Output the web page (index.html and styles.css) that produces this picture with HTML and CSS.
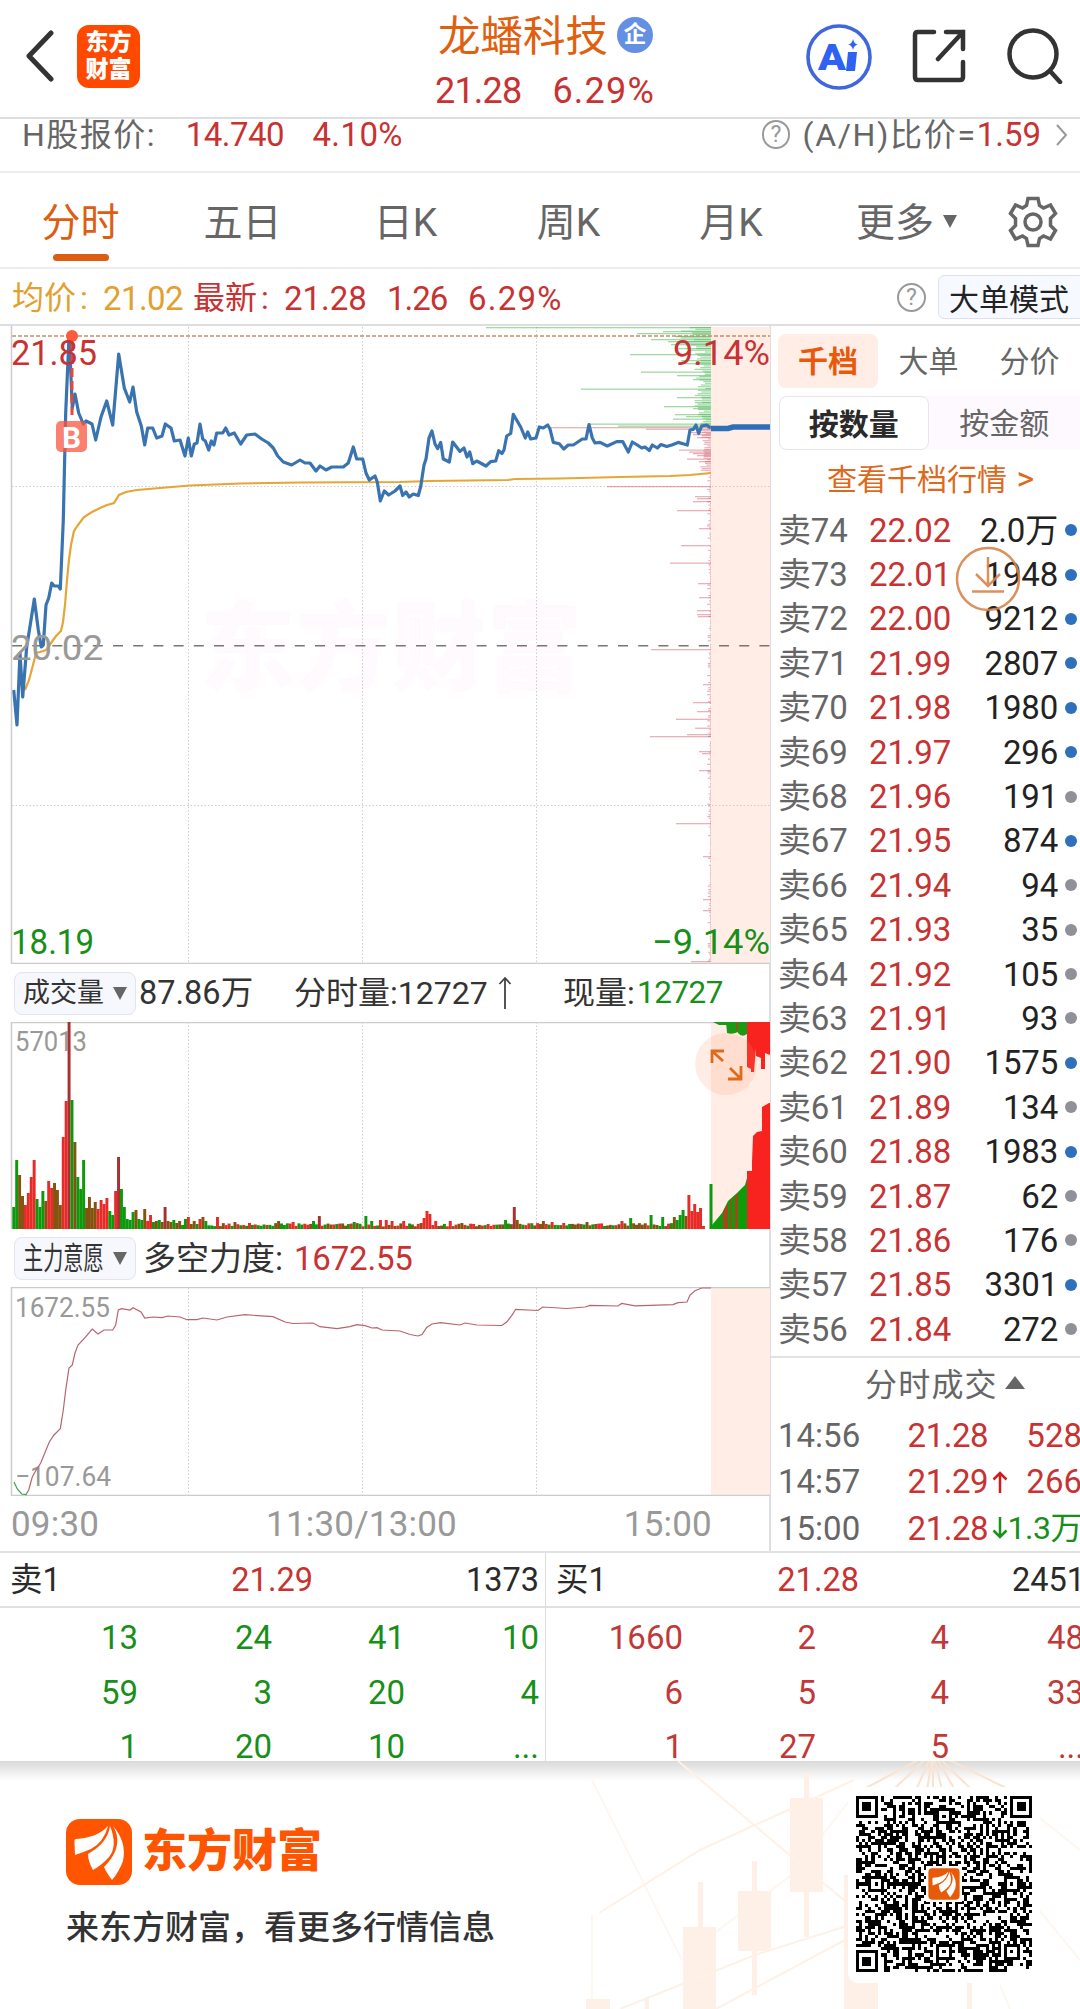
FILE: index.html
```html
<!DOCTYPE html>
<html lang="zh-CN">
<head>
  <meta charset="UTF-8" />
  <title>龙蟠科技 21.28 6.29%</title>
  <link rel="stylesheet" href="styles.css">
</head>
<body>

  <header class="header">
    <svg class="back" width="30" height="52" viewBox="0 0 30 52"><path d="M26 3 L4 26 L26 49" /></svg>
    <div class="app-icon"><span>东方</span><span>财富</span></div>
    <div class="stock">
      <div class="stock-name">龙蟠科技<span class="badge">企</span></div>
      <div class="stock-price"><span>21.28</span><span>6.29%</span></div>
    </div>
    <svg class="ai" width="68" height="68" viewBox="0 0 68 68">
      <circle cx="34" cy="34" r="31" fill="none" stroke="#3f66dc" stroke-width="3.6" />
      <text x="13" y="47" textLength="28" lengthAdjust="spacingAndGlyphs">A</text>
      <path d="M43 29 L52 29 L50 48 L41 48 Z M48 16 Q49 21 53 21.500 Q49 22 48 27 Q47 22 43 21.500 Q47 21 48 16 Z" fill="#2f62f2" />
    </svg>
    <svg class="share" width="54" height="54" viewBox="0 0 54 54"><path d="M22 3 H6 Q3 3 3 6 V48 Q3 51 6 51 H48 Q51 51 51 48 V33 M34 3 H51 V20 M51 3 L26 30" /></svg>
    <svg class="search" width="56" height="56" viewBox="0 0 56 56"><circle cx="26" cy="26" r="23.500" /><path d="M43 43 L53 54" /></svg>
  </header>

  <div class="h-row">
    <span class="h-label">H股报价:</span>
    <span class="h-price">14.740</span>
    <span class="h-pct">4.10%</span>
    <span class="help">?</span>
    <span class="ratio">(A/H)比价=<b>1.59</b></span>
    <svg width="14" height="24" viewBox="0 0 14 24"><path d="M2 2 L11 12 L2 22" fill="none" stroke="#999" stroke-width="2" /></svg>
  </div>

  <nav class="tabs">
    <a class="tab active">分时</a>
    <a class="tab">五日</a>
    <a class="tab">日K</a>
    <a class="tab">周K</a>
    <a class="tab">月K</a>
    <a class="tab more">更多<i class="tri"></i></a>
    <svg class="gear" width="50" height="52" viewBox="-25 -26 50 52">
      <path d="M-5 -23.500 H5 L6.500 -16.500 L10.500 -14 L17.500 -17 L22.500 -8.500 L17.500 -3.500 V3.500 L22.500 8.500 L17.500 17 L10.500 14 L6.500 16.500 L5 23.500 H-5 L-6.500 16.500 L-10.500 14 L-17.500 17 L-22.500 8.500 L-17.500 3.500 V-3.500 L-22.500 -8.500 L-17.500 -17 L-10.500 -14 L-6.500 -16.500 Z" />
      <circle r="8" />
    </svg>
  </nav>

  <div class="info">
    <span class="avg-label">均价<em>:</em></span>
    <span class="avg">21.02</span>
    <span class="last-label">最新<em>:</em></span>
    <span class="last">21.28</span>
    <span class="chg">1.26</span>
    <span class="pct">6.29%</span>
    <span class="help">?</span>
    <button class="big-mode">大单模式</button>
  </div>

  <main class="main">
    <section class="charts">
      <svg class="chart" width="771" height="638" viewBox="0 326 771 638">
        <rect x="711" y="327" width="59" height="637" fill="#ffede6" />
        <text class="watermark" x="200" y="683" textLength="382" lengthAdjust="spacingAndGlyphs">东方财富</text>
        <g class="grid">
          <path d="M188.500 327 V964 M362.500 327 V964 M536.500 327 V964 M12 486.500 H770 M12 805.500 H770" />
        </g>
        <g id="depth"></g>
        <path d="M12 336 H770" stroke="#c39164" stroke-width="1.300" stroke-dasharray="4 2" />
        <path d="M12 645.700 H770" stroke="#777" stroke-width="1.600" stroke-dasharray="10 10.200" />
        <polyline id="avgLine" fill="none" stroke="#e5a636" stroke-width="2.200" />
        <polyline id="priceLine" fill="none" stroke="#3a74b0" stroke-width="3.200" stroke-linejoin="round" />
        <path d="M711 428.500 H728 L733 427 H770" fill="none" stroke="#2f6fb8" stroke-width="5.500" />
        <circle cx="72" cy="336" r="6" fill="#fb5a3c" />
        <path d="M72 342 V415" stroke="#e8473c" stroke-width="3" stroke-dasharray="9 4" />
        <rect x="56" y="421" width="31" height="31" rx="5" fill="#fa5540" fill-opacity=".75" />
        <text x="62" y="448" class="mark" textLength="19" lengthAdjust="spacingAndGlyphs">B</text>
        <g class="label">
          <text class="red" x="11" y="365" textLength="86" lengthAdjust="spacingAndGlyphs">21.85</text>
          <text class="red" x="673" y="365" textLength="97" lengthAdjust="spacingAndGlyphs">9.14%</text>
          <text class="gray" x="11" y="660" textLength="92" lengthAdjust="spacingAndGlyphs">20.02</text>
          <text class="green" x="11" y="954" textLength="83" lengthAdjust="spacingAndGlyphs">18.19</text>
          <text class="green" x="652" y="954" textLength="118" lengthAdjust="spacingAndGlyphs">−9.14%</text>
        </g>
        <path class="frame" d="M11.500 326 V963.500 H770" />
      </svg>

      <div class="chart-bar">
        <span class="picker"><span class="picker-text">成交量</span><i class="tri"></i></span>
        <span class="vol">87.86万</span>
        <span class="vol-min">分时量:12727</span>
        <svg width="14" height="34" viewBox="0 0 14 34"><path d="M7 33 V2 M1.500 8 L7 2 L12.500 8" fill="none" stroke="#444" stroke-width="1.800" /></svg>
        <span class="vol-now">现量:</span><span class="vol-now-num green">12727</span>
      </div>

      <svg class="chart" width="771" height="207" viewBox="0 1022 771 207">
        <rect x="711" y="1022" width="59" height="207" fill="#ffede6" />
        <g class="grid"><path d="M188.500 1022 V1229 M362.500 1022 V1229 M536.500 1022 V1229" /></g>
        <g class="label small"><text class="gray" x="15" y="1051" textLength="72" lengthAdjust="spacingAndGlyphs">57013</text></g>
        <path class="frame" d="M11.500 1229 V1022.500 H770" />
        <g id="volume"></g>
        <path d="M713 1022 H727 V1025 H719 Z M726 1022 H738 V1032 Q732 1035 727 1033 Z M738 1022 H747 V1034 Q742 1038 738 1033 Z" fill="#1c9a16" />
        <path d="M736 1022 h2 v9 h-2 z" fill="#8a5a14" />
        <path d="M747 1022 H770 V1055 L765 1053 V1069 H761 V1058 L756 1056 V1048 L754 1072 L751 1072 V1069 L747 1067 Z" fill="#f8221f" />
        <path d="M712 1229 V1225 L722 1213 L728 1201 L737 1193 L745 1185 L747 1178 V1229 Z" fill="#0f9c0b" />
        <path d="M723 1229 V1212 L728 1203 V1229 Z M735 1229 V1196 L738 1193 V1229 Z M730 1229 V1199 h1.500 V1229 Z" fill="#a5471a" />
        <path d="M747 1229 V1171 H752 V1162 L753 1136 L757 1132 L762 1131 V1107 L769 1103 H770 V1229 Z" fill="#f8221f" />
        <circle cx="726" cy="1064" r="31" fill="#ff9664" fill-opacity=".17" />
        <path d="M712 1063 V1051 H724 M712 1051 L723 1061 M728 1079 H741 V1066 M741 1079 L730 1068" fill="none" stroke="#e06a1c" stroke-width="2.800" />
      </svg>

      <div class="chart-bar">
        <span class="picker narrow"><span class="picker-text"><span>主力意愿</span></span><i class="tri"></i></span>
        <span class="force">多空力度:</span>
        <span class="force-num">1672.55</span>
      </div>

      <svg class="chart" width="771" height="209" viewBox="0 1287 771 209">
        <rect x="711" y="1288" width="59" height="207" fill="#ffede6" />
        <g class="grid"><path d="M188.500 1288 V1495 M362.500 1288 V1495 M536.500 1288 V1495" /></g>
        <path class="frame" d="M770 1287.500 H11.500 V1495.500 H770" />
        <g class="label small">
          <text class="gray" x="15" y="1317" textLength="95" lengthAdjust="spacingAndGlyphs">1672.55</text>
          <text class="gray" x="15" y="1486" textLength="96" lengthAdjust="spacingAndGlyphs">−107.64</text>
        </g>
        <polyline points="14,1482 17.300,1489 21.700,1494 26,1494.500 28.700,1490" fill="none" stroke="#4a9c55" stroke-width="1.200" />
        <polyline id="forceLine" fill="none" stroke="#b8646c" stroke-width="1.200" />
      </svg>

      <div class="axis"><span>09:30</span><span>11:30/13:00</span><span>15:00</span></div>
    </section>

    <aside class="side">
      <div class="side-tabs"><span class="on">千档</span><span>大单</span><span>分价</span></div>
      <div class="side-mode"><span class="on">按数量</span><span>按金额</span></div>
      <a class="side-link">查看千档行情 <i>&gt;</i></a>
      <div class="asks" id="asks"></div>
      <div class="deals-title">分时成交<i class="tri-up"></i></div>
      <div class="deals">
        <div class="deal"><span>14:56</span><b>21.28</b><i></i><b class="n">528</b></div>
        <div class="deal"><span>14:57</span><b>21.29</b><i><svg width="16" height="22" viewBox="0 0 16 22"><path d="M8 22 V2 M1.500 8.500 L8 2 L14.500 8.500" fill="none" stroke="#d01c1c" stroke-width="2.500" /></svg></i><b class="n">266</b></div>
        <div class="deal"><span>15:00</span><b>21.28</b><i><svg width="16" height="22" viewBox="0 0 16 22"><path d="M8 0 V20 M1.500 13.500 L8 20 L14.500 13.500" fill="none" stroke="#18921a" stroke-width="2.500" /></svg></i><b class="n green">1.3万</b></div>
      </div>
      <svg class="float-btn" width="66" height="66" viewBox="0 0 66 66"><circle cx="33" cy="33" r="31" /><path d="M33 11 V40 M21 28 L33 40 L45 28 M17 45.500 H49" /></svg>
    </aside>
  </main>

  <section class="book">
    <div class="book-half">
      <div class="book-head"><span>卖1</span><b>21.29</b><span class="q">1373</span></div>
      <div class="book-grid sell">
        <span>13</span><span>24</span><span>41</span><span>10</span>
        <span>59</span><span>3</span><span>20</span><span>4</span>
        <span>1</span><span>20</span><span>10</span><span>...</span>
      </div>
    </div>
    <div class="book-half buy-half">
      <div class="book-head"><span>买1</span><b>21.28</b><span class="q">2451</span></div>
      <div class="book-grid buy">
        <span>1660</span><span>2</span><span>4</span><span>48</span>
        <span>6</span><span>5</span><span>4</span><span>33</span>
        <span>1</span><span>27</span><span>5</span><span>...</span>
      </div>
    </div>
  </section>

  <footer class="footer">
    <svg class="footer-bg" width="520" height="248" viewBox="560 1761 520 248">
      <g fill="#fff0e7">
        <rect x="790" y="1798" width="33" height="94" /><rect x="804" y="1773" width="5" height="164" />
        <rect x="738" y="1891" width="33" height="60" /><rect x="752" y="1861" width="5" height="134" />
        <rect x="683" y="1927" width="33" height="82" /><rect x="698" y="1882" width="5" height="50" />
        <rect x="844" y="1875" width="34" height="134" /><rect x="586" y="1999" width="24" height="10" />
        <rect x="645" y="1998" width="4" height="11" /><rect x="967" y="1980" width="5" height="29" />
      </g>
      <g fill="none" stroke="#fef1e6" stroke-width="2">
        <path d="M678 1761 L792 1857 L862 1915 M599 1913 L700 1850 L854 1780 M620 2009 L755 1955 L850 1925 M716 2009 L845 1940" />
        <path d="M592 1780 L682 1960 M592 1915 V2000 M716 1932 L790 1876 L850 1800 M1035 1814 L1080 1850 M1035 1905 L1080 1960 M1000 1985 L1010 2009" stroke-opacity=".6" />
        <path d="M933 1752 L866 1788 M933 1752 L895 1788 M933 1752 L916 1790 M933 1752 L927 1790 M933 1752 V1790 M933 1752 L942 1790 M933 1752 L955 1790 M933 1752 L972 1790 M933 1752 L1006 1788" stroke="#fbe3d0" />
      </g>
    </svg>
    <div class="brand">
      <div class="brand-row">
        <svg width="66" height="66" viewBox="0 0 66 66">
          <rect width="66" height="66" rx="14" fill="#ff5500" />
          <g id="wing" fill="#fff">
            <path d="M42 7 C35 15 24 19 10 20 Q8 20 8.500 24 L9 36 Q18 33 25 30 Q38 23 42 7 Z" />
            <path d="M44 7 C42 20 34 28 22 35 Q22 42 27 51 Q36 46 43 38 Q52 27 44 7 Z" />
            <path d="M47 7 C56 22 50 36 38 48 Q40 53 46 61 Q53 53 57 42 Q61 23 47 7 Z" />
          </g>
        </svg>
        <span class="brand-name">东方财富</span>
      </div>
      <p class="slogan">来东方财富，看更多行情信息</p>
    </div>
    <div class="qr">
      <svg id="qr" width="176" height="176" viewBox="0 0 57 57" shape-rendering="crispEdges"></svg>
      <svg class="qr-logo" width="36" height="36" viewBox="-5 -5 76 76">
        <rect x="-5" y="-5" width="76" height="76" fill="#fff" />
        <rect width="66" height="66" rx="8" fill="#e65a08" />
        <use href="#wing" />
      </svg>
    </div>
  </footer>

  <script src="script.js"></script>
</body>
</html>
```

FILE: styles.css
```css
* {
  box-sizing: border-box;
}
body {
  margin: 0;
  width: 1080px;
  height: 2009px;
  overflow: hidden;
  background: #fff;
  color: #2a2a2a;
  font-family: Roboto, "Noto Sans CJK SC", sans-serif;
  font-size: 33px;
  line-height: 1;
}
i, em {
  font-style: normal;
}
b {
  font-weight: normal;
}
svg {
  display: block;
  flex-shrink: 0;
}
.red { color: #c83232; fill: #c83232; }
.green { color: #188f18; fill: #188f18; }
.gray { color: #999; fill: #999; }

/* header */
.header {
  height: 119px;
  display: flex;
  align-items: center;
  padding: 0 17px 6px 25px;
  border-bottom: 2px solid #dcdee0;
}
.back {
  fill: none;
  stroke: #333;
  stroke-width: 5;
  stroke-linecap: round;
  stroke-linejoin: round;
}
.app-icon {
  width: 63px;
  height: 63px;
  margin: 2px 0 0 22px;
  border-radius: 12px;
  background: #ff4800;
  color: #fff;
  font-weight: 900;
  font-size: 23px;
  line-height: 27px;
  text-align: center;
  padding-top: 4px;
}
.app-icon span {
  display: block;
}
.stock {
  width: 230px;
  margin-left: 295px;
  padding-top: 13px;
}
.stock-name {
  display: flex;
  align-items: center;
  height: 54px;
  padding: 0 0 0 3px;
  font-size: 42.500px;
  color: #e0600f;
  white-space: nowrap;
}
.badge {
  width: 36px;
  height: 36px;
  margin: -5px 0 0 9px;
  border-radius: 50%;
  background: #6390e3;
  color: #fff;
  font-size: 23px;
  font-weight: 700;
  line-height: 35px;
  text-align: center;
}
.stock-price {
  display: flex;
  justify-content: space-between;
  width: 220px;
  height: 50px;
  line-height: 55px;
  font-size: 36px;
  color: #c83232;
}
.stock-price span:first-child {
  letter-spacing: -.8px;
}
.stock-price span:last-child {
  letter-spacing: 1.2px;
}
.ai {
  margin: 2px 0 0 140px;
}
.ai text {
  font-size: 36px;
  font-weight: 900;
  fill: #2f62f2;
}
.share,
.search {
  fill: none;
  stroke: #333;
  stroke-width: 4.5;
  stroke-linecap: round;
}
.share {
  margin-left: 39px;
}
.search {
  margin-left: auto;
}

/* H share quote */
.h-row {
  height: 54px;
  display: flex;
  align-items: center;
  padding: 0 11px 21px 22px;
  border-bottom: 2px solid #ececec;
  color: #666;
  white-space: nowrap;
}
.h-label {
  width: 164px;
  font-size: 32px;
  letter-spacing: 1.5px;
}
.h-price {
  width: 127px;
  letter-spacing: -.5px;
  color: #c83232;
}
.h-pct {
  width: 450px;
  letter-spacing: .4px;
  color: #c83232;
}
.help {
  width: 29px;
  height: 29px;
  border: 2.500px solid #999;
  border-radius: 50%;
  color: #999;
  font-size: 23px;
  line-height: 25px;
  text-align: center;
}
.ratio {
  width: 265px;
  padding-left: 12px;
  font-size: 32px;
  letter-spacing: 1.7px;
}
.ratio b {
  color: #c83232;
  letter-spacing: 0;
  font-size: 33px;
}

/* period tabs */
.tabs {
  height: 96px;
  display: grid;
  grid-template-columns: 161px 163px 163px 163px 162px 189px 60px;
  border-bottom: 2px solid #ececec;
  font-size: 39px;
  line-height: 101px;
  color: #666;
  text-align: center;
}
.tab {
  position: relative;
}
.tab.active {
  color: #dc5e12;
}
.tab.active::after {
  content: "";
  position: absolute;
  left: 53px;
  top: 81px;
  width: 56px;
  height: 7px;
  border-radius: 4px;
  background: #dc5e12;
}
.tri {
  display: inline-block;
  border: 7px solid transparent;
  border-top: 13px solid #666;
  border-bottom: 0;
}
.tab.more .tri {
  margin-left: 9px;
  vertical-align: 8px;
}
.gear {
  align-self: center;
  margin: -4px 0 0 7px;
  fill: none;
  stroke: #666;
  stroke-width: 3.5;
}

/* quote info */
.info {
  height: 57px;
  display: flex;
  align-items: center;
  padding: 3px 0 0 12px;
  border-bottom: 2px solid #dcdee0;
  color: #c83232;
  white-space: nowrap;
  overflow: hidden;
}
.info em {
  margin-left: 4px;
}
.info .avg-label,
.info .avg {
  color: #e2a02f;
}
.info span {
  flex-shrink: 0;
}
.avg-label { width: 91px; font-size: 32px; }
.avg { width: 90px; letter-spacing: -.6px; }
.last-label { width: 91px; font-size: 32px; }
.last { width: 103px; }
.chg { width: 81px; letter-spacing: -1px; }
.pct { width: 429px; letter-spacing: 1.2px; }
.info .help { margin-top: -2px; }
.big-mode {
  flex-shrink: 0;
  width: 150px;
  height: 44px;
  margin: -3px 0 0 12px;
  padding: 0 0 0 10px;
  border: 1px solid #dfe2ee;
  border-radius: 6px;
  background: #f6f9ff;
  color: #222;
  font: 30px/40px "Noto Sans CJK SC", sans-serif;
  text-align: left;
}

/* charts column */
.main {
  display: flex;
  height: 1227px;
  border-bottom: 2px solid #e2e2e2;
}
.charts {
  width: 771px;
  border-right: 2px solid #dcdee0;
}
.grid path {
  fill: none;
  stroke: #ccc;
  stroke-width: 1;
  stroke-dasharray: 1.5 2;
}
.frame {
  fill: none;
  stroke: #ccc;
  stroke-width: 1.5;
}
.watermark {
  font-size: 98px;
  font-weight: 900;
  fill: #fefafd;
}
.mark {
  font-size: 29px;
  font-weight: 700;
  fill: #fff;
}
.label text {
  font-size: 35px;
}
.label.small text {
  font-size: 28px;
}
.chart-bar {
  display: flex;
  align-items: center;
  height: 58px;
  padding-left: 14px;
  color: #333;
  white-space: nowrap;
}
.picker {
  display: flex;
  align-items: center;
  width: 122px;
  height: 43px;
  padding-left: 8px;
  border: 1px solid #e2e4ee;
  border-radius: 8px;
  background: #f6f8fe;
}
.picker-text {
  width: 90px;
  font-size: 27px;
}
.picker.narrow .picker-text span {
  display: inline-block;
  font-size: 31px;
  transform: scaleX(.65);
  transform-origin: left;
}
.vol { width: 158px; padding-left: 3px; font-size: 32.500px; }
.vol-min { width: 204px; font-size: 32px; }
.vol-now { width: 74px; margin-left: 51px; font-size: 32px; }
.vol-now-num { font-size: 31.500px; letter-spacing: -.5px; }
.force { width: 158px; padding-left: 7px; font-size: 33px; }
.force-num { color: #c83232; letter-spacing: -.2px; }
.axis {
  display: flex;
  justify-content: space-between;
  padding: 11px 57px 0 11px;
  font-size: 35px;
  letter-spacing: .2px;
  color: #999;
}

/* right column */
.side {
  position: relative;
  width: 309px;
  overflow: hidden;
  color: #666;
}
.side-tabs {
  display: flex;
  height: 54px;
  margin: 8px 0 0 7px;
  font-size: 30px;
  line-height: 56px;
  text-align: center;
}
.side-tabs span {
  width: 102px;
}
.side-tabs .on {
  width: 101px;
  border-radius: 8px;
  background: #ffede6;
  color: #e8590c;
  font-weight: 700;
}
.side-mode {
  display: flex;
  height: 54px;
  margin: 8px 0 0 8px;
  background: #fdf9ff;
  font-size: 30px;
  line-height: 55px;
  text-align: center;
}
.side-mode span {
  width: 153px;
}
.side-mode .on {
  width: 151px;
  border: 1px solid #e8e4ec;
  border-radius: 8px;
  background: #fff;
  color: #2a2a2a;
  font-weight: 700;
}
.side-link {
  display: block;
  height: 58px;
  padding-left: 56px;
  color: #dc6a1c;
  font-size: 30px;
  line-height: 57px;
}
.side-link i {
  margin-left: 2px;
  font-size: 34px;
}
.asks {
  height: 850px;
  border-bottom: 2px solid #e2e2e2;
}
.ask {
  display: grid;
  grid-template-columns: 74px 99px 107px 22px;
  align-items: center;
  height: 44.4px;
  padding-left: 7px;
  font-size: 33px;
  letter-spacing: -.2px;
}
.ask b {
  color: #c83232;
  text-align: right;
}
.ask .num {
  color: #222;
  text-align: right;
}
.dot {
  width: 12px;
  height: 12px;
  margin-left: 7px;
  border-radius: 50%;
  background: #909098;
}
.dot.big {
  background: #2f70bd;
}
.deals-title {
  display: flex;
  align-items: center;
  height: 54px;
  padding-left: 94px;
  font-size: 32px;
  letter-spacing: 1.2px;
}
.tri-up {
  margin: -6px 0 0 7px;
  border: 10px solid transparent;
  border-bottom: 13px solid #666;
  border-top: 0;
}
.deal {
  display: grid;
  grid-template-columns: 82px 128px 22px 72px;
  align-items: center;
  height: 46.500px;
  padding-left: 7px;
}
.deal b {
  color: #c83232;
  text-align: right;
  letter-spacing: -.5px;
}
.deal i {
  padding-left: 4px;
}
.deal .n {
  justify-self: end;
  white-space: nowrap;
  letter-spacing: 0;
}
.deal .n.green {
  color: #188f18;
  font-size: 32px;
  letter-spacing: -.5px;
}
.float-btn {
  position: absolute;
  left: 184px;
  top: 220px;
  fill: none;
  stroke: #d9844c;
  stroke-width: 2.5;
  opacity: .9;
}

/* order queue */
.book {
  display: flex;
  height: 208px;
  overflow: hidden;
}
.book-half {
  width: 546px;
  flex-shrink: 0;
  border-right: 1.500px solid #dcdcdc;
}
.buy-half {
  border-right: 0;
}
.book-head {
  display: grid;
  grid-template-columns: 160px 143px 234px;
  align-items: center;
  height: 55px;
  padding: 2px 0 0 10px;
  border-bottom: 2px solid #e0e0e0;
  font-size: 32.500px;
}
.book-head b {
  color: #c83232;
  text-align: right;
}
.book-head .q {
  padding-right: 8px;
  text-align: right;
}
.book-grid {
  display: grid;
  grid-template-columns: 138px 134px 133px 134px;
  grid-auto-rows: 54.800px;
  align-items: center;
  padding-top: 2px;
  text-align: right;
}
.buy-half .book-grid {
  grid-template-columns: 137px 133px 133px 135px;
}
.sell { color: #188f18; }
.buy { color: #c23838; }

/* share footer */
.footer {
  position: relative;
  display: flex;
  justify-content: space-between;
  height: 248px;
  padding: 58px 40px 0 66px;
  background: linear-gradient(#d9d9d9, #f4f4f4 14px, #fff 20px);
}
.footer-bg {
  position: absolute;
  right: 0;
  top: 0;
}
.brand-row {
  display: flex;
  align-items: center;
}
.brand-name {
  margin: 0 0 1px 10px;
  color: #ff5500;
  font-size: 45px;
  font-weight: 900;
}
.slogan {
  margin: 26px 0 0;
  color: #333;
  font-size: 33px;
  font-weight: 500;
}
.qr {
  position: relative;
  width: 192px;
  height: 196px;
  margin-top: -32px;
  padding: 9px 8px;
  border-radius: 10px;
  background: #fff;
}
.qr-logo {
  position: absolute;
  left: 78px;
  top: 79px;
}
```

FILE: script.js
```js
const SVG = 'http://www.w3.org/2000/svg';

// same sequence on every load
let seed = 20240;
function rnd() {
  seed = (seed * 16807) % 2147483647;
  return seed / 2147483647;
}

function rect(parent, x, y, w, h, fill) {
  const r = document.createElementNS(SVG, 'rect');
  r.setAttribute('x', x);
  r.setAttribute('y', y);
  r.setAttribute('width', w);
  r.setAttribute('height', h);
  r.setAttribute('fill', fill);
  parent.appendChild(r);
}

// price line
document.getElementById('priceLine').setAttribute('points', `
13.7,690 17,725 20,653 22.7,697 26.7,647 30.7,622 34.3,599 38.3,630 41.3,647 43.3,645 46,605 48.7,598 51.7,583 54.3,586
58.3,586 60.3,589 63.3,520 65.7,413 68,360 69,337 70.7,370 72.3,408 75,394 78.7,413 83.3,424 86,421 92,424 95.7,440
101,417 106.7,401 112.7,425 115,398 118.7,354 124.3,388 129.7,402 133,387 136.7,412 141.3,426 144.7,445 147.7,428
152.7,428 156.7,438 162,436 165.3,424 171,428 174.3,441 180,440 185,456 188.3,438 191.3,456 194.3,444 197,443 200,424
202.7,439 205.3,441 208.7,450 211.3,441 214,445 216.7,433 222.7,433 225.7,428 229,435 234.3,433 240.7,444 246.7,435
255,434 261.7,439 268.3,443 273.3,448 277.7,456 283.3,462 291.7,465 300,460 305,463 310,463 316,471 320,466 326,470
331.7,467 343.3,467 348.3,463 353.3,447 356.7,459 362.7,459 366,473 369.3,480 375,476 377.3,482 380.3,501 384.3,491
388.7,495 395,491 400,486 402.7,495.5 406,492 409.3,497 413.3,494 418.3,495.5 420.7,486.5 424,465 426,459 429,438
432,431 435,444 437.7,448.6 440.7,442.4 443.3,459 449.3,462 452.7,442 460,451.4 464,448 467,457 469.7,452 472.7,463.7
476.7,461 486,466 490.7,461.6 495.7,461 498.7,450.6 502,453.5 504,450 506.7,436 510.7,433.5 513.3,414.3 516,419
520.7,427 525.3,438 527.7,432 530.7,439 536,438 539.3,427 543.3,428 547.7,425 550,429 553.3,442.4 559.3,443.7 563.7,449
568.3,445 573.3,445 582.3,439 586,439 589,424.5 592.3,438 595,443 600,442.4 607.3,446 616.7,441.6 622.7,441.6 628.3,452
632.3,442 637.3,445 641.7,448 645,447 649.3,450.6 652.3,445 657.3,448 661,444.5 666.7,446.5 671.7,445 678.3,442.4
687.3,445 690,430 693.3,429.4 696,425 698.7,433.5 701.7,426 706.7,425 710.7,428`);

document.getElementById('avgLine').setAttribute('points', `
25,690 29,680 33,665 36,653 40,652 46,650 51,643 56,636 61,631 63,622 65,605 67,580 69,560 71,545 74,531 78,525 84,517
92,512 100,508 107,505 114,503 119,495 126,492 137,490 160,488 190,485.5 240,483.5 300,482.5 400,482 430,481 508,480
515,479 560,478.5 620,477 670,476 690,475 711,473`);

document.getElementById('forceLine').setAttribute('points', `
28.7,1490 32.3,1477 35,1472 40.7,1463 49.3,1442 54,1435 60.3,1428.7 63.3,1410 65.7,1390 69,1368 72.3,1365 75,1353
78,1345 85,1337.7 92.3,1329 98,1334 104,1330 112.7,1330 115.7,1325 118.3,1310 121.7,1308.7 130,1310 133,1307.7 141,1312
144.7,1318 153,1317 162,1317.7 168,1316 180,1317 187,1319.7 197,1319.7 203,1318 217,1320 227,1317 245,1314.7 273,1316.7
285,1322 293,1323.5 313,1323 320,1326.7 337,1328.7 350,1326.7 357,1324.7 365,1325.7 372,1328 377,1327.7 382,1330
400,1331 410,1334.5 418,1336 422,1334.6 426.7,1327.5 432,1324 440.7,1322.7 460,1325 465,1323 477,1325 501.7,1325.5
506.7,1322 511.7,1315.6 515.7,1309.3 538,1310.5 542.7,1307 566.7,1308.5 585,1307 590,1305.4 618,1306 621.7,1303.4
635,1305.8 673,1304.6 678,1302.6 687,1302 690,1295 695,1290.7 701.7,1288 711,1288`);

// price distribution, [y, length]
const levels = [
  [327, 225], [331, 48], [333, 74], [336, 35], [339, 60], [341, 43], [344, 40], [348, 36], [354, 81], [360, 30], [363, 26],
  [371.500, 70], [375, 34], [379, 18], [388.500, 130], [397, 34], [402, 16], [406, 47], [408, 18], [414, 36], [416, 25],
  [418.500, 38], [423.500, 122], [425.500, 93], [427, 163], [428.600, 65], [432, 22], [434, 18], [437, 14], [449.500, 32],
  [451.500, 22], [453, 18], [455, 14], [458.500, 24], [461, 12], [486, 104], [496, 16], [498, 14], [501, 18], [510, 34],
  [528, 12], [545, 30], [562.500, 41], [583, 13], [597, 12], [610, 14], [614, 14], [616, 13], [649, 60], [684, 8],
  [702, 18], [711, 14], [718.700, 35], [727.600, 16], [734, 24], [736, 61], [751, 12], [753, 9], [770, 12], [823, 35],
  [856, 8], [899, 8], [910, 8], [961, 20]
];
const depth = document.getElementById('depth');
const green = 'rgba(70,180,80,.5)';
const red = 'rgba(205,84,100,.45)';
for (let y = 327; y < 962; y += 1.740) {
  let len = rnd() * 4;
  if (y < 350) len = 14 + rnd() * 22;
  else if (y < 425) len = 5 + rnd() * 12;
  else if (y < 470) len = 3 + rnd() * 8;
  else if (rnd() < .5) len = 1;
  rect(depth, 711 - len, y, len, 1.200, y < 426 ? green : red);
}
levels.forEach(([y, len]) => rect(depth, 711 - len, y, len, 1.300, y < 426 ? green : red));

// minute volume, one bar per minute
const first = [22, 69, 54, 33, 24, 36, 52, 69, 30, 22, 38, 28, 48, 41, 46, 39, 24, 92, 128, 207, 129, 87, 52, 40, 69, 21, 32, 21,
  27, 20, 29, 25, 31, 18, 14, 38, 72, 40, 22, 10, 9, 17, 19, 10, 9, 20, 8, 14, 7, 8, 9, 7, 22, 8, 7, 9, 6, 8, 4, 10, 12,
  5, 8, 5, 10, 12, 8];
const colors = 'ggbbrrrrgggbrrbbbrrdgbgggbbbbrrrrggrdgggggbggbrrgbgbdbbgbbggrbbgrb';
const spikes = { 70: 12, 76: 7, 81: 6, 91: 8, 96: 7, 103: 8, 105: 13, 117: 7, 121: 13, 123: 8, 126: 9, 128: 9, 130: 8,
  134: 8, 141: 11, 142: 18, 143: 15, 145: 8, 150: 8, 154: 6, 169: 9, 172: 22, 173: 9, 182: 8, 185: 7, 189: 6, 197: 7,
  209: 8, 212: 11, 219: 14, 223: 12, 227: 12, 228: 9, 229: 14, 230: 19, 231: 13, 232: 34, 233: 18, 234: 25, 235: 17,
  236: 21, 237: 3, 238: 0, 239: 0 };
const fills = { g: '#0d990b', r: '#e92b28', b: '#84530f', d: '#a83030' };
const volume = document.getElementById('volume');
for (let i = 0; i < 240; i++) {
  const h = i < first.length ? first[i] : (i in spikes ? spikes[i] : 2.500 + rnd() * 3.500);
  let c = colors[i] || 'grb'[Math.floor(rnd() * 3)];
  if (i > 140 && i < 144 || i > 231) c = 'r';
  if (i === 172 || i === 105) c = 'd';
  if (i === 121 || i === 212 || i === 223 || i === 230) c = 'g';
  if (h) rect(volume, 12.300 + i * 2.910, 1229 - h, 2.950, h, fills[c]);
}
rect(volume, 709.500, 1184, 3, 45, fills.g);

// ask levels
const asks = ['2.0万', 1948, 9212, 2807, 1980, 296, 191, 874, 94, 35, 105, 93, 1575, 134, 1983, 62, 176, 3301, 272];
const bigOrders = [0, 1, 2, 3, 4, 5, 7, 12, 14, 17];
document.getElementById('asks').innerHTML = asks.map((n, i) => `
  <div class="ask"><span>卖${74 - i}</span><b>${(22.02 - i / 100).toFixed(2)}</b><span class="num">${n}</span><i class="dot${bigOrders.includes(i) ? ' big' : ''}"></i></div>`).join('');

// qr code
const qr = document.getElementById('qr');
const inFinder = (x, y) => (x < 8 && y < 8) || (x > 48 && y < 8) || (x < 8 && y > 48);
for (let y = 0; y < 57; y++) {
  for (let x = 0; x < 57; x++) {
    if (inFinder(x, y)) continue;
    if (rnd() < .5) rect(qr, x, y, 1, 1, '#000');
  }
}
function square(x, y, n) {
  rect(qr, x, y, n, n, '#000');
  rect(qr, x + 1, y + 1, n - 2, n - 2, '#fff');
  rect(qr, x + 2, y + 2, n - 4, n - 4, '#000');
}
[[0, 0], [50, 0], [0, 50]].forEach(([x, y]) => square(x, y, 7));
[[26, 4], [4, 26], [48, 26], [26, 48], [48, 48]].forEach(([x, y]) => square(x, y, 5));
```
